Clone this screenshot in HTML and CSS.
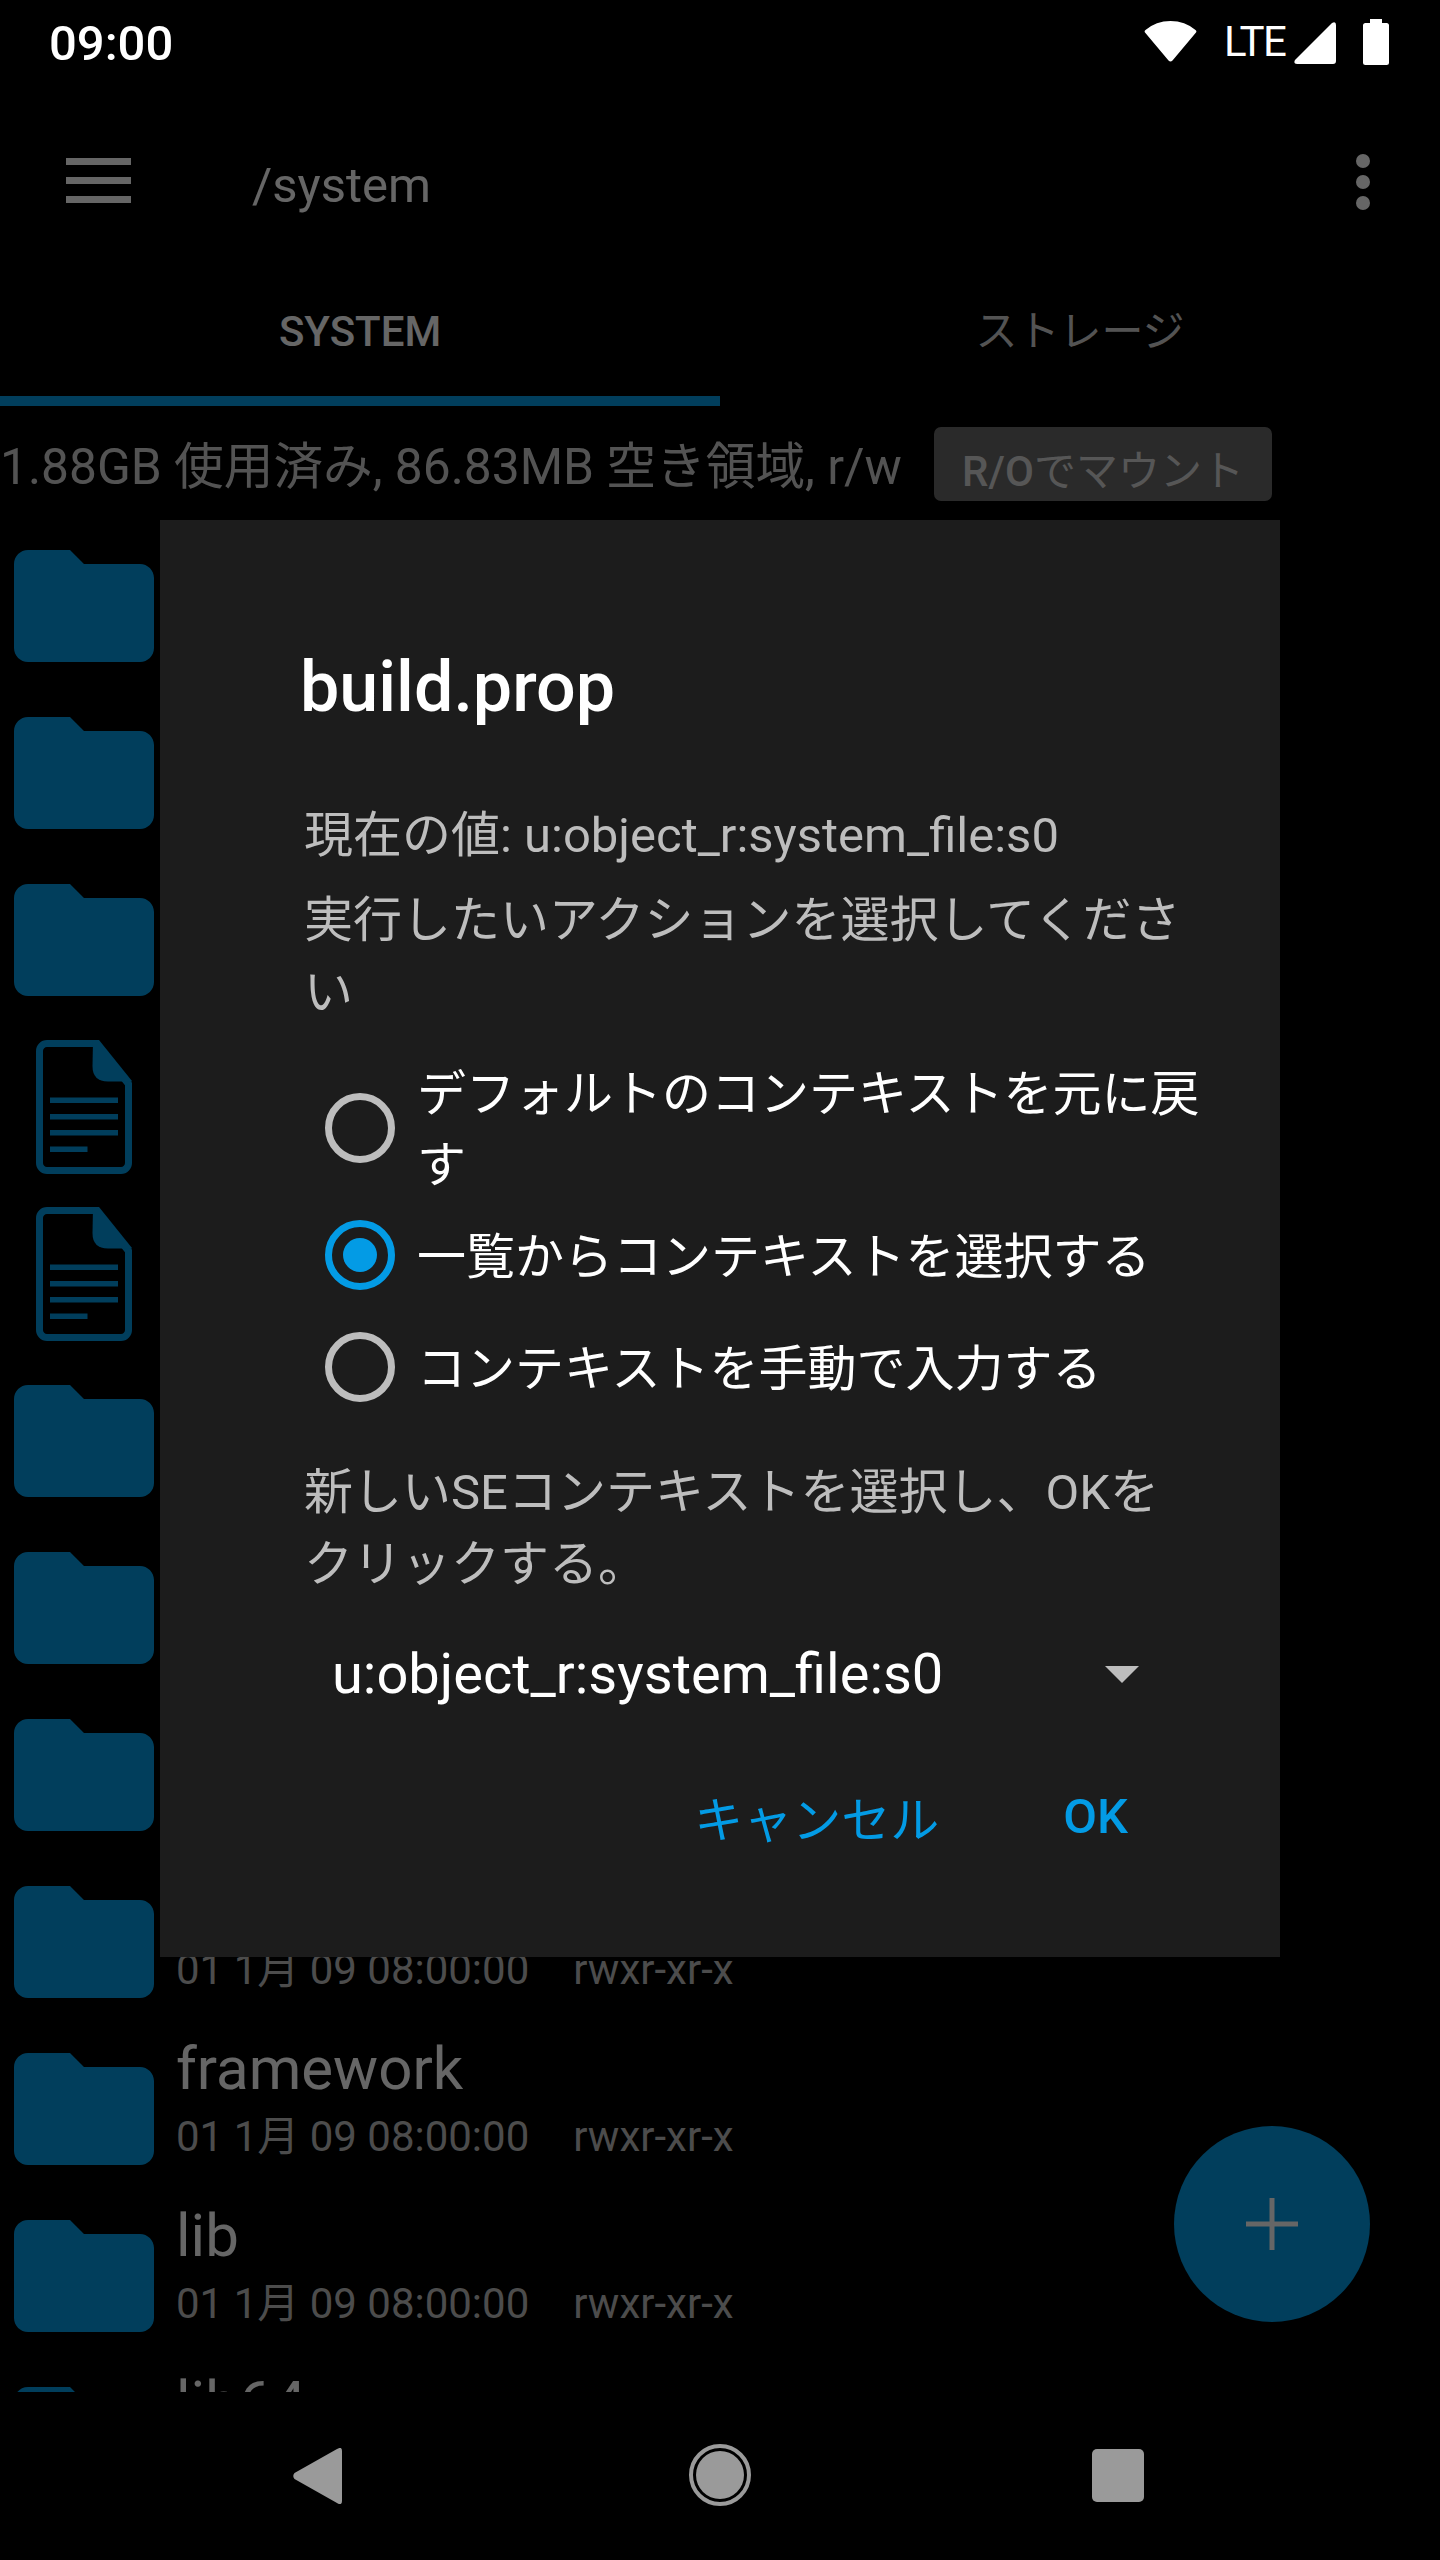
FILE: index.html
```html
<!DOCTYPE html>
<html lang="ja">
<head>
<meta charset="utf-8">
<title>build.prop</title>
<link rel="stylesheet" href="styles.css">
</head>
<body>
<svg class="defs" width="0" height="0" aria-hidden="true">
  <symbol id="folder" viewBox="2 4 20 16"><path d="M10 4H4c-1.1 0-2 .9-2 2v12c0 1.1.9 2 2 2h16c1.1 0 2-.9 2-2V8c0-1.1-.9-2-2-2h-8l-2-2z"/></symbol>
  <symbol id="file" viewBox="0 0 96 134">
    <path class="file-line" d="M11 3.500H60L92.500 44V123a7.500 7.500 0 0 1-7.500 7.500H11A7.500 7.500 0 0 1 3.500 123V11A7.500 7.500 0 0 1 11 3.500z"/>
    <path d="M57 0H63L96 41V41.500H72Q56.500 41.500 56.500 26z"/>
    <rect x="14" y="57.500" width="68" height="5.500"/>
    <rect x="14" y="74" width="68" height="5.500"/>
    <rect x="14" y="90" width="68" height="5.500"/>
    <rect x="14" y="106.500" width="37.500" height="5.500"/>
  </symbol>
</svg>
<div class="screen">
  <header class="status">
    <span class="clock">09:00</span>
    <div class="status-icons">
      <svg class="wifi" viewBox="0 0 53 42"><path d="M1 12.500Q0 11 1.500 10Q12 1 26.500 1T51.500 10Q53 11 52 12.500L28.500 40.500Q26.500 42.500 24.500 40.500z"/></svg>
      <span class="lte">LTE</span>
      <svg class="signal" viewBox="0 0 42 42"><path d="M38 1Q42-1 42 3V39Q42 42 39 42H3Q-1 42 1 38z"/></svg>
      <svg class="battery" viewBox="0 0 26 46"><path d="M7 0H19V4H23.500Q26 4 26 6.500V43.500Q26 46 23.500 46H2.500Q0 46 0 43.500V6.500Q0 4 2.500 4H7z"/></svg>
    </div>
  </header>

  <main class="app">
    <div class="toolbar">
      <div class="hamburger"><i></i><i></i><i></i></div>
      <span class="path">/system</span>
      <div class="dots"><i></i><i></i><i></i></div>
    </div>
    <div class="tabs">
      <div class="tab tab-active">SYSTEM</div>
      <div class="tab">ストレージ</div>
    </div>
    <div class="info">
      <span class="usage">1.88GB 使用済み, 86.83MB 空き領域, r/w</span>
      <span class="mount"><b>R/O</b>でマウント</span>
    </div>
    <ul class="list">
      <li class="row"><div class="ico"><svg class="folder"><use href="#folder"/></svg></div></li>
      <li class="row"><div class="ico"><svg class="folder"><use href="#folder"/></svg></div></li>
      <li class="row"><div class="ico"><svg class="folder"><use href="#folder"/></svg></div></li>
      <li class="row"><div class="ico"><svg class="file"><use href="#file"/></svg></div></li>
      <li class="row"><div class="ico"><svg class="file"><use href="#file"/></svg></div></li>
      <li class="row"><div class="ico"><svg class="folder"><use href="#folder"/></svg></div></li>
      <li class="row"><div class="ico"><svg class="folder"><use href="#folder"/></svg></div></li>
      <li class="row"><div class="ico"><svg class="folder"><use href="#folder"/></svg></div></li>
      <li class="row"><div class="ico"><svg class="folder"><use href="#folder"/></svg></div>
        <div class="meta-col"><div class="name"></div><div class="meta"><span>01 1月 09 08:00:00</span><span>rwxr-xr-x</span></div></div></li>
      <li class="row"><div class="ico"><svg class="folder"><use href="#folder"/></svg></div>
        <div class="meta-col"><div class="name">framework</div><div class="meta"><span>01 1月 09 08:00:00</span><span>rwxr-xr-x</span></div></div></li>
      <li class="row"><div class="ico"><svg class="folder"><use href="#folder"/></svg></div>
        <div class="meta-col"><div class="name">lib</div><div class="meta"><span>01 1月 09 08:00:00</span><span>rwxr-xr-x</span></div></div></li>
      <li class="row"><div class="ico"><svg class="folder"><use href="#folder"/></svg></div>
        <div class="meta-col"><div class="name">lib64</div></div></li>
    </ul>
    <div class="fab"><svg viewBox="0 0 52 52"><path d="M23.500 0h5v23.500H52v5H28.500V52h-5V28.500H0v-5h23.500z"/></svg></div>
    <div class="scrim"></div>

    <section class="dialog">
      <h1 class="title">build.prop</h1>
      <p class="body current">現在の値: u:object_r:system_file:s0</p>
      <p class="body">実行したいアクションを選択してください</p>
      <div class="radios">
        <div class="radio"><span class="mark"></span><span class="label">デフォルトのコンテキストを元に戻す</span></div>
        <div class="radio"><span class="mark mark-on"></span><span class="label">一覧からコンテキストを選択する</span></div>
        <div class="radio"><span class="mark"></span><span class="label">コンテキストを手動で入力する</span></div>
      </div>
      <p class="body hint">新しいSEコンテキストを選択し、OKをクリックする。</p>
      <div class="spinner"><span>u:object_r:system_file:s0</span><i class="caret"></i></div>
      <div class="actions"><span class="cancel">キャンセル</span><span class="ok">OK</span></div>
    </section>
  </main>

  <nav class="navbar">
    <svg class="back" viewBox="0 0 49 56"><path d="M1.500 31Q-1 28 1.500 25L44 1Q49-2 49 3V53Q49 58 44 55z"/></svg>
    <span class="home"><i></i></span>
    <span class="recents"></span>
  </nav>
</div>
</body>
</html>
```
FILE: styles.css
```css
* { box-sizing: border-box; }
html, body { margin: 0; padding: 0; background: #000; }
body { font-family: Roboto, "Noto Sans CJK JP", sans-serif; color: #fff; }
.defs { position: absolute; }
.screen { width: 1440px; height: 2560px; display: flex; flex-direction: column; overflow: hidden; background: #000; }

/* status bar */
.status { height: 84px; flex: none; display: flex; justify-content: space-between; align-items: flex-start; padding: 0 51px 0 49px; }
.clock { font-size: 49px; font-weight: 500; line-height: 88px; }
.status-icons { display: flex; align-items: flex-start; }
.wifi { width: 53px; height: 42px; fill: #fff; margin-top: 20px; }
.lte { font-size: 42px; line-height: 84px; margin-left: 27px; width: 70px; letter-spacing: -1.5px; }
.signal { width: 42px; height: 42px; fill: #fff; margin-top: 22px; }
.battery { width: 26px; height: 46px; fill: #fff; margin: 19px 0 0 27px; }

/* app */
.app { flex: 1; position: relative; display: flex; flex-direction: column; min-height: 0; }
.toolbar { height: 196px; flex: none; display: flex; align-items: center; padding: 0 70px 0 66px; }
.hamburger { width: 65px; display: flex; flex-direction: column; gap: 12px; margin-top: -3px; }
.hamburger i { height: 7px; background: #fff; display: block; }
.path { font-size: 49px; margin-left: 121px; flex: 1; color: #fff; position: relative; top: 3px; }
.dots { display: flex; flex-direction: column; gap: 7px; }
.dots i { width: 14px; height: 14px; border-radius: 50%; background: #fff; display: block; }

.tabs { height: 126px; flex: none; display: flex; }
.tab { width: 720px; font-size: 42px; text-align: center; line-height: 103px; color: #d0d0d0; border-bottom: 10px solid transparent; }
.tab-active { color: #fff; font-weight: 500; border-bottom-color: #039be5; }

.info { height: 117px; flex: none; display: flex; align-items: flex-start; padding-top: 21px; }
.usage { font-size: 49.700px; line-height: 80px; color: #d0d0d0; white-space: nowrap; width: 934px; }
.mount { width: 338px; height: 74px; border-radius: 7px; background: #6a6a6a; font-size: 42px; line-height: 90px; text-align: center; color: #d8d8d8; white-space: nowrap; }
.mount b { font-weight: 500; }

.list { list-style: none; margin: 0; padding: 0; flex: 1; min-height: 0; overflow: hidden; }
.row { height: 167px; display: flex; align-items: flex-start; padding-top: 27px; }
.ico { width: 176px; height: 112px; flex: none; display: flex; align-items: center; padding-left: 14px; }
.folder { width: 140px; height: 112px; fill: #039be5; display: block; }
.file { width: 96px; height: 134px; fill: #039be5; display: block; flex: none; margin-left: 22px; }
.file-line { fill: none; stroke: #039be5; stroke-width: 7; }
.meta-col { margin-top: -18px; }
.name { font-size: 60px; line-height: 68px; height: 74px; color: #fff; }
.meta { font-size: 42px; line-height: 56px; color: #bdbdbd; display: flex; gap: 44px; }

.fab { position: absolute; left: 1174px; top: 2042px; width: 196px; height: 196px; border-radius: 50%; background: #039be5; display: flex; align-items: center; justify-content: center; }
.fab svg { width: 52px; height: 52px; fill: #fff; }
.scrim { position: absolute; inset: 0; background: rgba(0, 0, 0, .6); }

/* dialog */
.dialog { position: absolute; left: 160px; top: 436px; width: 1120px; height: 1437px; background: #1c1c1c; padding: 125px 40px 0 140px; display: flex; flex-direction: column; }
.title { margin: 0; font-size: 70px; font-weight: 500; line-height: 84px; }
.body { margin: 0; font-size: 49px; line-height: 72px; color: #bdbdbd; padding-left: 4px; max-width: 905px; }
.current { margin-top: 71px; margin-bottom: 13px; }
.radios { margin-top: 30px; margin-left: 25px; }
.radio { display: flex; align-items: center; min-height: 112px; }
.mark { width: 70px; height: 70px; flex: none; border-radius: 50%; border: 7px solid #bdbdbd; position: relative; margin: 0 22px 4px 0; }
.mark-on { border-color: #039be5; }
.mark-on::after { content: ""; position: absolute; left: 11px; top: 11px; width: 34px; height: 34px; border-radius: 50%; background: #039be5; }
.label { font-size: 49px; line-height: 71px; color: #fff; flex: 1; }
.hint { margin-top: 32px; }
.spinner { display: flex; align-items: center; justify-content: space-between; margin: 31px 44px 0 32px; padding-right: 57px; height: 84px; font-size: 56px; color: #fff; }
.caret { width: 0; height: 0; border-left: 17px solid transparent; border-right: 17px solid transparent; border-top: 17px solid #bdbdbd; }
.actions { display: flex; justify-content: flex-end; align-items: center; margin: 65px 112px 0 0; font-size: 49px; color: #039be5; gap: 124px; }
.ok { font-weight: 500; }

/* nav */
.navbar { height: 168px; flex: none; position: relative; display: flex; align-items: center; }
.back { position: absolute; left: 293px; top: 56px; width: 49px; height: 56px; fill: #9a9a9a; }
.home { position: absolute; left: 689px; top: 52px; width: 62px; height: 62px; border-radius: 50%; border: 4px solid #9a9a9a; padding: 3px; display: block; }
.home i { display: block; width: 100%; height: 100%; border-radius: 50%; background: #9a9a9a; }
.recents { position: absolute; left: 1092px; top: 57px; width: 52px; height: 53px; border-radius: 5px; background: #9a9a9a; }
```
